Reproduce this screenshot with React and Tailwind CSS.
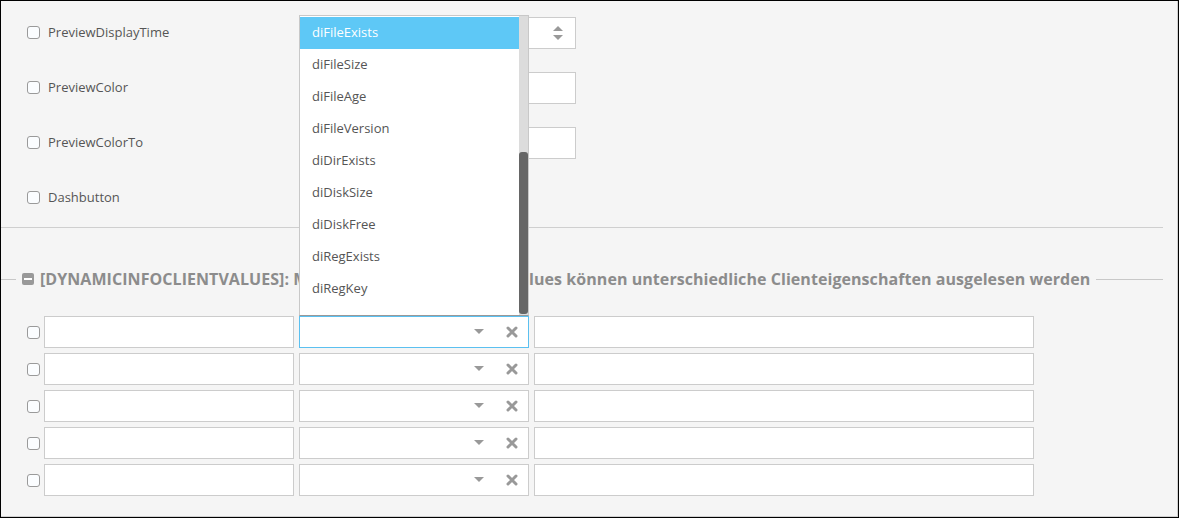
import React from "react";

const font = { fontFamily: '"Open Sans", "Noto Sans", sans-serif' };

function Check() {
  return <div className="w-[13px] h-[13px] shrink-0 rounded-[3px] border border-[#9a9a9a] bg-[#fbfdff]" />;
}

function Caret() {
  return (
    <svg width="10" height="6" viewBox="0 0 10 6">
      <path d="M0 0 L10 0 L5 5 Z" fill="#999" />
    </svg>
  );
}

function XIcon() {
  return (
    <svg width="12" height="12" viewBox="0 0 12 12">
      <path d="M2 2 L10 10 M10 2 L2 10" stroke="#999" strokeWidth="3" strokeLinecap="round" />
    </svg>
  );
}

function Spinner() {
  return (
    <svg width="10" height="14" viewBox="0 0 10 14">
      <path d="M0 5 L10 5 L5 0 Z" fill="#999" />
      <path d="M0 9 L10 9 L5 14 Z" fill="#999" />
    </svg>
  );
}

function MinusSquare() {
  return (
    <div className="w-[12px] h-[12px] rounded-[2px] bg-[#999] flex items-center justify-center">
      <div className="w-[8px] h-[2px] bg-white" />
    </div>
  );
}

const items = [
  "diFileExists",
  "diFileSize",
  "diFileAge",
  "diFileVersion",
  "diDirExists",
  "diDiskSize",
  "diDiskFree",
  "diRegExists",
  "diRegKey",
];

function TopRow({ label, children }) {
  return (
    <div className="h-[55px] flex items-center">
      <div className="w-[298px] flex items-center gap-[8px] pl-[26px]">
        <Check />
        <span className="text-[13px] text-[#555]">{label}</span>
      </div>
      {children}
    </div>
  );
}

function Input({ className = "" }) {
  return <div className={"h-[32px] bg-white border border-[#ccc] " + className} />;
}

export default function App() {
  return (
    <div style={font} className="relative w-[1179px] h-[518px] bg-[#f5f5f5] border border-black overflow-hidden">
      <div className="h-full border-r border-b border-[#d0d0d0]">
        <div className="w-[1162px] pt-[4px]">
          <TopRow label="PreviewDisplayTime">
            <div className="w-[277px] h-[32px] bg-white border border-[#ccc] flex items-center justify-end pr-[12px]">
              <Spinner />
            </div>
          </TopRow>
          <TopRow label="PreviewColor">
            <Input className="w-[277px]" />
          </TopRow>
          <TopRow label="PreviewColorTo">
            <Input className="w-[277px]" />
          </TopRow>
          <TopRow label="Dashbutton" />
          <div className="h-px bg-[#cfcfcf] mt-[2px]" />

          <div className="mt-[40px] flex items-center">
            <div className="w-[15px] h-px bg-[#c8c8c8]" />
            <div className="ml-[6px]">
              <MinusSquare />
            </div>
            <span className="ml-[6px] text-[16px] tracking-[0.06px] leading-[22px] font-bold text-[#8c8c8c] whitespace-nowrap">
              [DYNAMICINFOCLIENTVALUES]: Mit den DynamicInfoClientValues können unterschiedliche Clienteigenschaften ausgelesen werden
            </span>
            <div className="flex-1 ml-[6px] h-px bg-[#c8c8c8]" />
          </div>

          <div className="mt-[26px] flex flex-col gap-[5px] pl-[26px]">
            {[0, 1, 2, 3, 4].map((i) => (
              <div key={i} className="flex items-center">
                <Check />
                <div className="w-[4px]" />
                <Input className="w-[250px]" />
                <div
                  className={
                    "ml-[5px] w-[230px] h-[32px] bg-white border flex items-center justify-end gap-[22px] pr-[10px] " +
                    (i === 0 ? "border-[#5bc0f0]" : "border-[#ccc]")
                  }
                >
                  <Caret />
                  <XIcon />
                </div>
                <Input className="ml-[5px] w-[500px]" />
              </div>
            ))}
          </div>
        </div>
      </div>

      <div className="absolute left-[298px] top-[14px] w-[230px] h-[301px] bg-white border border-[#c8c8c8] border-b-[#999] flex overflow-hidden">
        <div className="flex-1 overflow-hidden pt-[1px]">
          {items.map((t, i) => (
            <div
              key={t}
              className={
                "h-[32px] flex items-center pl-[12px] text-[13px] " +
                (i === 0 ? "bg-[#5ec8f6] text-white" : "text-[#555]")
              }
            >
              {t}
            </div>
          ))}
        </div>
        <div className="w-[9px] bg-[#dcdcdc] flex flex-col justify-end pb-[1px]">
          <div className="h-[162px] bg-[#666] rounded-[3px]" />
        </div>
      </div>
    </div>
  );
}
